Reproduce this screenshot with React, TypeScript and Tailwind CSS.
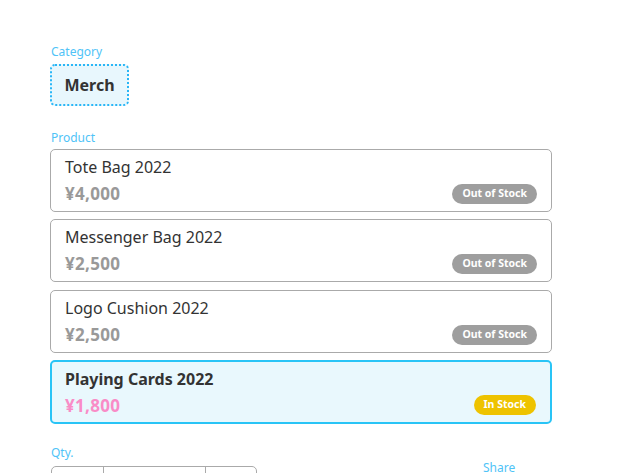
import React from "react";

type P = { name: string; price: string; inStock: boolean; selected?: boolean };

const products: P[] = [
  { name: "Tote Bag 2022", price: "¥4,000", inStock: false },
  { name: "Messenger Bag 2022", price: "¥2,500", inStock: false },
  { name: "Logo Cushion 2022", price: "¥2,500", inStock: false },
  { name: "Playing Cards 2022", price: "¥1,800", inStock: true, selected: true },
];

export default function App() {
  return (
    <div
      className="w-[624px] h-[473px] overflow-hidden bg-white text-[#333]"
      style={{ fontFamily: '"Noto Sans", "Noto Sans CJK JP", sans-serif' }}
    >
      <div className="pl-[50px] pt-[44px] w-[552px]">
        <div className="text-[12px] leading-[16px] text-[#4fc3f7] pl-[1px]">Category</div>
        <div className="mt-[4px] inline-flex items-center justify-center w-[79px] h-[42px] rounded-[5px] border-2 border-dotted border-[#29b6f6] bg-[#e8f7fd] text-[16px] font-bold text-[#333]">
          Merch
        </div>
        <div className="mt-[24px] text-[12px] leading-[16px] text-[#4fc3f7] pl-[1px]">Product</div>
        <div className="mt-[3px] flex flex-col gap-[7.3px]">
          {products.map((p) => (
            <div
              key={p.name}
              className={
                p.selected
                  ? "relative h-[64px] rounded-[5px] border-2 border-[#29c4f6] bg-[#e9f8fd] px-[13px] pt-[6px]"
                  : "relative h-[63px] rounded-[5px] border border-[#aaaaaa] bg-white px-[14px] pt-[6px]"
              }
            >
              <div
                className={
                  p.selected
                    ? "text-[16px] leading-[22px] font-bold text-[#333]"
                    : "text-[16px] leading-[22px] text-[#333]"
                }
              >
                {p.name}
              </div>
              <div
                className={
                  p.selected
                    ? "mt-[4px] text-[17px] leading-[24px] font-bold text-[#f98cc7] tracking-[0.3px]"
                    : "mt-[4px] text-[17px] leading-[24px] font-bold text-[#999] tracking-[0.3px]"
                }
              >
                {p.price}
              </div>
              <div
                className={
                  p.inStock
                    ? "absolute right-[14px] bottom-[7px] h-[20px] px-[10px] rounded-full bg-[#eec300] text-white text-[10.5px] font-bold flex items-center"
                    : "absolute right-[14px] bottom-[7px] h-[20px] px-[10px] rounded-full bg-[#9e9e9e] text-white text-[10.5px] font-bold flex items-center"
                }
              >
                {p.inStock ? "In Stock" : "Out of Stock"}
              </div>
            </div>
          ))}
        </div>
        <div className="mt-[21px] flex">
          <div className="w-[240px]">
            <div className="text-[12px] leading-[16px] text-[#4fc3f7] pl-[1px]">Qty.</div>
            <div className="mt-[5px] flex w-[206px] h-[40px] rounded-[5px] border border-[#aaaaaa] ml-[1px]">
              <div className="w-[52px] border-r border-[#aaaaaa]" />
              <div className="w-[102px] border-r border-[#aaaaaa]" />
              <div className="flex-1" />
            </div>
          </div>
          <div className="ml-[193px] pt-[15px] text-[12px] leading-[16px] text-[#4fc3f7]">Share</div>
        </div>
      </div>
    </div>
  );
}
